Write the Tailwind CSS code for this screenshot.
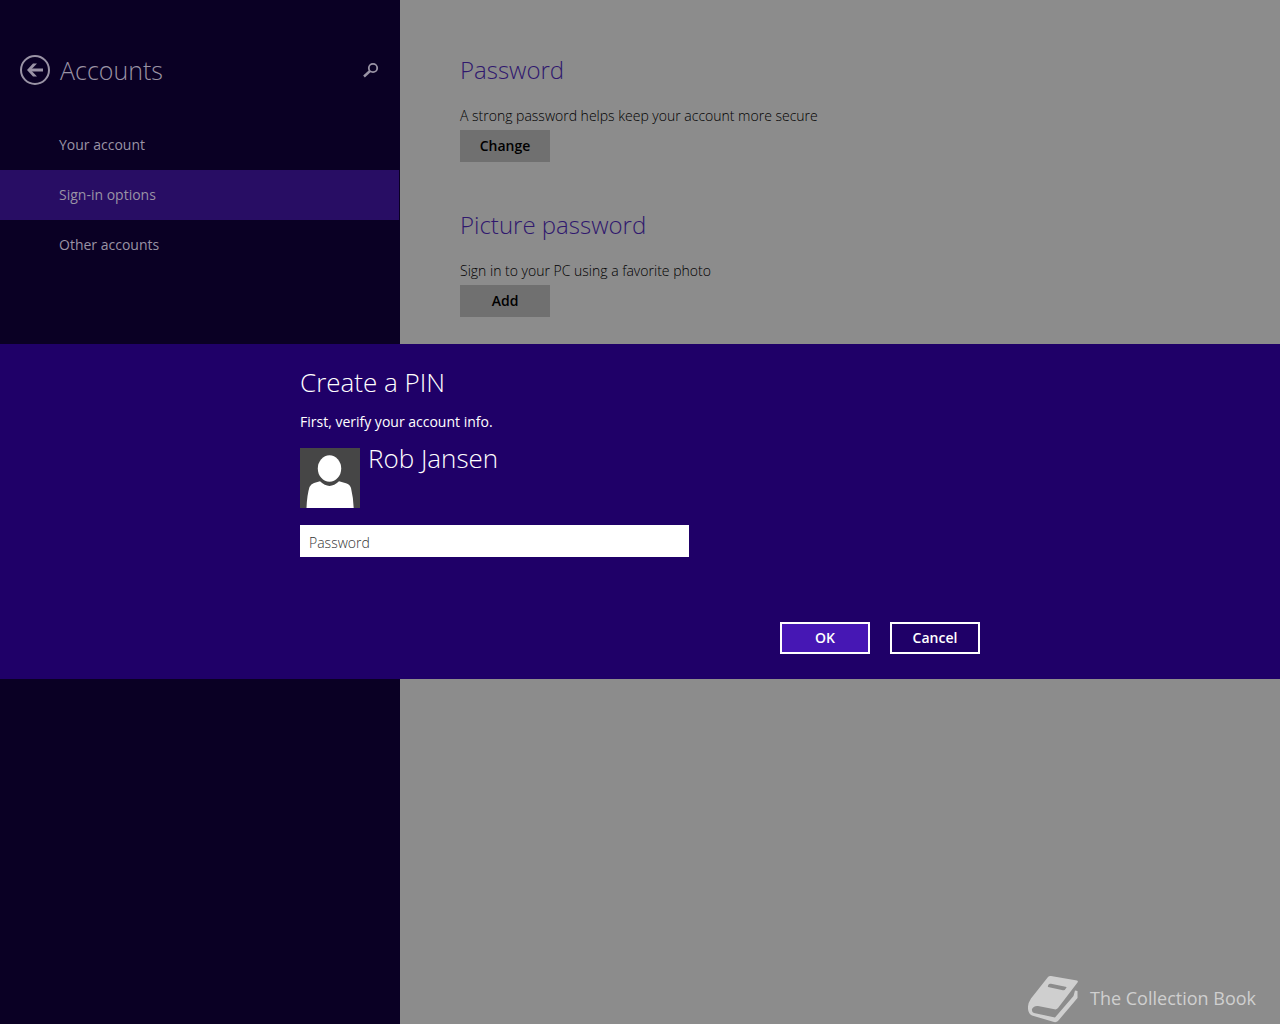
<!DOCTYPE html>
<html lang="en">
<head>
<meta charset="utf-8">
<meta name="viewport" content="width=device-width, initial-scale=1">
<title>Accounts</title>
<script src="https://cdn.jsdelivr.net/npm/@tailwindcss/browser@4"></script>
</head>
<body class="flex min-h-screen bg-[#8c8c8c] font-['Segoe_UI','Open_Sans','Noto_Sans',sans-serif] text-sm text-black">
  <aside class="w-[400px] shrink-0 bg-[#0a0024] pt-[50px] text-[#9a93a5]">
    <header class="flex h-10 items-center pr-[21px] pl-5">
      <button type="button" aria-label="Back" class="mr-[10px] size-[30px]">
        <svg viewBox="0 0 30 30" class="size-[30px]" fill="none" stroke="currentColor">
          <circle cx="15" cy="15" r="14" stroke-width="2"/>
          <path d="M9 15H23" stroke-width="3"/>
          <path d="M7 15L13 8.500H17L10.800 15L17 21.500H13Z" fill="currentColor" stroke="none"/>
        </svg>
      </button>
      <h1 class="text-[25px] leading-10 font-light">Accounts</h1>
      <button type="button" aria-label="Search" class="ml-auto size-4">
        <svg viewBox="0 0 16 16" class="size-4" fill="none" stroke="currentColor">
          <circle cx="10" cy="6" r="4.200" stroke-width="1.800"/>
          <path d="M7 9L1 14.500" stroke-width="2.400"/>
        </svg>
      </button>
    </header>
    <nav class="mt-[30px] mr-px flex flex-col leading-[50px]">
      <a href="#account" class="pl-[59px]">Your account</a>
      <a href="#signin" aria-current="page" class="bg-[#280d64] pl-[59px]">Sign-in options</a>
      <a href="#other" class="pl-[59px]">Other accounts</a>
    </nav>
  </aside>

  <main class="flex grow flex-col pt-[50px] pl-[60px]">
    <section class="mb-[43px]">
      <h2 class="text-2xl leading-10 font-light text-[#30186e]">Password</h2>
      <p class="mt-4 leading-5 font-light">A strong password helps keep your account more secure</p>
      <button type="button" class="mt-1 h-8 w-[90px] bg-[#707070] font-semibold">Change</button>
    </section>
    <section>
      <h2 class="text-2xl leading-10 font-light text-[#30186e]">Picture password</h2>
      <p class="mt-4 leading-5 font-light">Sign in to your PC using a favorite photo</p>
      <button type="button" class="mt-1 h-8 w-[90px] bg-[#707070] font-semibold">Add</button>
    </section>
    <footer class="mt-auto mr-6 flex items-center gap-3 self-end text-[#cfcfcf]">
      <svg viewBox="0 0 50 48" class="h-12 w-[50px]" fill="none">
        <path fill="currentColor" fill-rule="evenodd" d="M20 1Q21.500 -.2 23 0L49 4.500Q50.500 5 49.500 6.500L30 32Q28.500 33.800 26.500 33.300L10 30Q6 29.500 4 33Q3.500 36 6 37L27 41.500L45.500 20L47 14.500L49.500 15V22L30 45Q28.500 46.500 26 46L4 39.500Q-.5 37 0 30.500Q.3 26.500 3 22.500ZM21 8Q19.500 9.500 20 11L35 14.200Q37 14.500 38.500 11.500Q38.800 11 37.500 10.800L23 7.800Q22 7.600 21 8Z"/>
      </svg>
      <span class="pb-1 text-lg">The Collection Book</span>
    </footer>
  </main>

  <div class="fixed inset-0 flex items-center pb-px">
    <form role="dialog" aria-labelledby="pin-title" class="w-full bg-[#1f0068] pt-[18px] pb-[25px] text-white">
      <div class="mx-auto max-w-[680px]">
        <h2 id="pin-title" class="text-[26px] leading-10 font-light">Create a PIN</h2>
        <p class="mt-[10px] leading-5">First, verify your account info.</p>
        <div class="mt-4 flex gap-2">
          <svg viewBox="0 0 60 60" class="size-[60px]" role="img" aria-label="Account picture">
            <path fill="#464646" d="M0 0H60V60H0Z"/>
            <ellipse cx="29.500" cy="20.500" rx="11.700" ry="13.200" fill="#fff"/>
            <path fill="#fff" d="M6.500 60Q7 47 9.500 39Q11 36 14 35L20 33.300Q29.500 42.500 39 33.300L46 35.200Q50 36.500 51 40Q53.200 49 53.700 60Z"/>
          </svg>
          <span class="text-[26px] leading-5 font-light">Rob Jansen</span>
        </div>
        <input type="password" placeholder="Password" aria-label="Password" class="mt-[17px] block h-8 w-[389px] bg-white px-[9px] pt-[2px] font-light text-black placeholder:text-[#333]">
        <div class="mt-[65px] flex justify-end gap-5 font-semibold">
          <button type="submit" class="h-8 w-[90px] border-2 border-white bg-[#4617b4]">OK</button>
          <button type="button" class="h-8 w-[90px] border-2 border-white">Cancel</button>
        </div>
      </div>
    </form>
  </div>
</body>
</html>
